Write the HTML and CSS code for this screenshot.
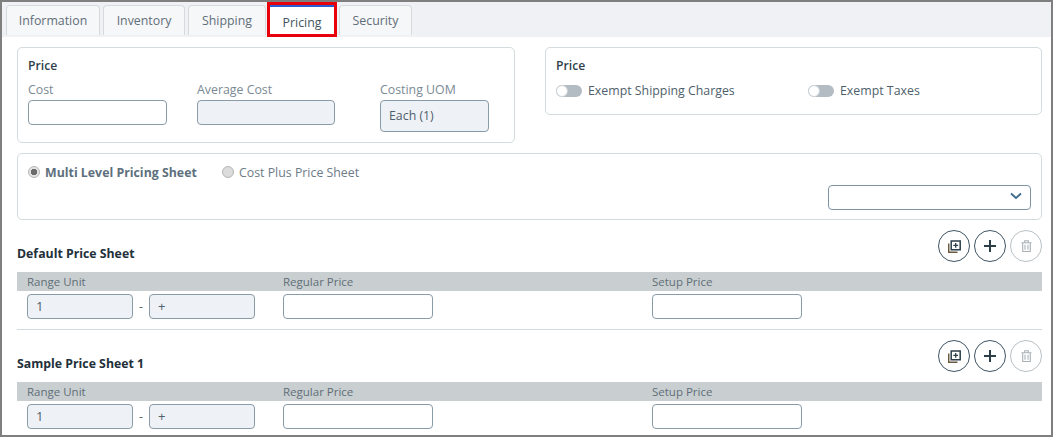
FILE: index.html
```html
<!DOCTYPE html>
<html lang="en">
<head>
<meta charset="utf-8">
<title>Pricing</title>
<link rel="stylesheet" href="styles.css">
</head>
<body>
<div class="frame">
  <nav class="tabs">
    <a class="tab tab-info">Information</a>
    <a class="tab tab-inv">Inventory</a>
    <a class="tab tab-ship">Shipping</a>
    <a class="tab-active"><span>Pricing</span></a>
    <a class="tab tab-sec">Security</a>
  </nav>
  <main class="content">
    <div class="top-row">
      <section class="panel panel-cost">
        <h3 class="panel-title">Price</h3>
        <div class="cost-fields">
          <div class="field field-cost"><label>Cost</label><div class="input"></div></div>
          <div class="field field-avg"><label>Average Cost</label><div class="input disabled"></div></div>
          <div class="field field-uom"><label>Costing UOM</label><div class="input disabled tall">Each (1)</div></div>
        </div>
      </section>
      <section class="panel panel-exempt">
        <h3 class="panel-title">Price</h3>
        <div class="toggles">
          <div class="toggle-item toggle-first"><span class="switch"><i></i></span>Exempt Shipping Charges</div>
          <div class="toggle-item"><span class="switch"><i></i></span>Exempt Taxes</div>
        </div>
      </section>
    </div>
    <section class="panel panel-sheet">
      <div class="radios">
        <div class="radio-item radio-first checked"><span class="radio"></span>Multi Level Pricing Sheet</div>
        <div class="radio-item"><span class="radio"></span>Cost Plus Price Sheet</div>
      </div>
      <div class="select-row">
        <div class="select">
          <svg width="12" height="8" viewBox="0 0 12 8"><path d="M1 1.5l5 4.500 5-4.500" fill="none" stroke="#3d6b8c" stroke-width="1.800"/></svg>
        </div>
      </div>
    </section>

    <section class="sheet">
      <div class="sheet-head">
        <h4>Default Price Sheet</h4>
        <div class="actions">
          <button class="circle"><svg width="13" height="13" viewBox="0 0 13 13"><path d="M.7 3.500v8.800h8.800" fill="none" stroke="#6b5a3e" stroke-width="1.500"/><path d="M3.200.9h9v8.800h-9z" fill="none" stroke="#2c3e4a" stroke-width="1.500"/><path d="M7.700 2.900v4.800M5.300 5.300h4.800" stroke="#2c3e4a" stroke-width="1.300"/></svg></button>
          <button class="circle"><svg width="12" height="12" viewBox="0 0 12 12"><path d="M6 0v12M0 6h12" stroke="#2c3e4a" stroke-width="2"/></svg></button>
          <button class="circle off"><svg width="11" height="12" viewBox="0 0 11 12"><path d="M.5 2.700h10M3.700 2.700V.8h3.600v1.900M1.700 2.700v8.800h7.600V2.700M4 4.700v5M7 4.700v5" fill="none" stroke="#a9b1b6" stroke-width="1.100"/></svg></button>
        </div>
      </div>
      <div class="grid-head"><span class="col-range">Range Unit</span><span class="col-reg">Regular Price</span><span>Setup Price</span></div>
      <div class="grid-row">
        <div class="input disabled range">1</div><span class="dash">-</span><div class="input disabled range">+</div>
        <div class="input price first-price"></div>
        <div class="input price"></div>
      </div>
    </section>
    <hr class="divider">
    <section class="sheet sheet-second">
      <div class="sheet-head">
        <h4>Sample Price Sheet 1</h4>
        <div class="actions">
          <button class="circle"><svg width="13" height="13" viewBox="0 0 13 13"><path d="M.7 3.500v8.800h8.800" fill="none" stroke="#6b5a3e" stroke-width="1.500"/><path d="M3.200.9h9v8.800h-9z" fill="none" stroke="#2c3e4a" stroke-width="1.500"/><path d="M7.700 2.900v4.800M5.300 5.300h4.800" stroke="#2c3e4a" stroke-width="1.300"/></svg></button>
          <button class="circle"><svg width="12" height="12" viewBox="0 0 12 12"><path d="M6 0v12M0 6h12" stroke="#2c3e4a" stroke-width="2"/></svg></button>
          <button class="circle off"><svg width="11" height="12" viewBox="0 0 11 12"><path d="M.5 2.700h10M3.700 2.700V.8h3.600v1.900M1.700 2.700v8.800h7.600V2.700M4 4.700v5M7 4.700v5" fill="none" stroke="#a9b1b6" stroke-width="1.100"/></svg></button>
        </div>
      </div>
      <div class="grid-head"><span class="col-range">Range Unit</span><span class="col-reg">Regular Price</span><span>Setup Price</span></div>
      <div class="grid-row">
        <div class="input disabled range">1</div><span class="dash">-</span><div class="input disabled range">+</div>
        <div class="input price first-price"></div>
        <div class="input price"></div>
      </div>
    </section>
  </main>
</div>
</body>
</html>
```
FILE: styles.css
```css
* { box-sizing: border-box; }
html, body { margin: 0; padding: 0; }
body { width: 1053px; height: 437px; overflow: hidden; background: #fff; font-family: "Open Sans", "Noto Sans", sans-serif; font-size: 12px; color: #5d6d78; }
.frame { width: 1053px; height: 437px; border: 2px solid #7f7f7f; overflow: hidden; background: #fff; }

.tabs { display: flex; height: 35px; background: #eff1f5; padding: 3px 0 0 4px; }
.tab { height: 30px; margin-right: 3px; border: 1px solid #d5dadd; border-bottom: 0; border-radius: 4px 4px 0 0; background: #f6f7f9; display: flex; align-items: center; justify-content: center; color: #5f6e78; font-size: 12.35px; }
.tab-info { width: 94px; }
.tab-inv { width: 82px; }
.tab-ship { width: 78px; margin-right: 1px; }
.tab-sec { width: 73px; }
.tab-active { width: 70px; height: 35px; margin-top: -3px; margin-right: 2px; border: 3px solid #e8000b; background: #fff; position: relative; display: flex; align-items: center; justify-content: center; padding-top: 6px; color: #41535f; font-size: 12.35px; }
.tab-active::before { content: ""; position: absolute; left: 0; right: 0; top: 0; height: 2px; background: #2a5bd0; }

.content { padding: 10px 9px 0 15px; }
.top-row { display: flex; justify-content: space-between; align-items: flex-start; }
.panel { border: 1px solid #d3dbde; border-radius: 5px; background: #fff; }
.panel-title { margin: 0; font-size: 12.2px; font-weight: 600; color: #2f3f4a; line-height: 17px; }
.panel-cost { width: 498px; height: 96px; padding: 9px 10px 0; }
.panel-exempt { width: 497px; height: 68px; padding: 9px 10px 0; }
.cost-fields { display: flex; margin-top: 8px; }
.field label { display: block; line-height: 16px; font-size: 12.35px; color: #7a8a95; margin-bottom: 2px; }
.field-cost { width: 169px; }
.field-cost .input { width: 139px; }
.field-avg { width: 183px; }
.field-avg .input { width: 138px; }
.field-uom .input { width: 109px; }
.input { height: 25px; border: 1px solid #8a9ba8; border-radius: 4px; background: #fff; color: #4f5f6b; font-size: 12.35px; padding: 0 0 2px 8px; display: flex; align-items: center; }
.input.disabled { background: #eef1f5; }
.input.tall { height: 32px; }
.range { font-size: 13px; }

.toggles { display: flex; margin-top: 9px; }
.toggle-item { display: flex; align-items: center; font-size: 12.35px; color: #4f5f6b; line-height: 16px; }
.toggle-first { width: 252px; }
.switch { width: 26px; height: 12px; border-radius: 6px; background: #b3bcc3; margin-right: 6px; position: relative; }
.switch i { position: absolute; left: 0; top: 0; width: 12px; height: 12px; border-radius: 50%; background: #fff; border: 1px solid #ccd3d8; }

.panel-sheet { margin-top: 10px; width: 1025px; height: 67px; padding: 11px 10px 0; }
.radios { display: flex; }
.radio-item { display: flex; align-items: center; line-height: 16px; font-size: 12.35px; color: #6c7b86; }
.radio-first { width: 194px; font-weight: 700; color: #5d6f7d; }
.radio { width: 12px; height: 12px; border-radius: 50%; border: 1px solid #b5b5b5; background: #dcdcdc; margin-right: 5px; margin-top: -2px; }
.checked .radio { background: radial-gradient(circle, #6b6b6b 0 3px, #e4e4e4 3.5px); }
.select-row { display: flex; justify-content: flex-end; margin-top: 4px; }
.select { width: 203px; height: 25px; border: 1px solid #7f94a3; border-radius: 4px; display: flex; align-items: center; justify-content: flex-end; padding: 0 8px 4px 0; }

.sheet { margin-top: 10px; width: 1025px; }
.sheet-second { margin-top: 10px; }
.sheet-head { display: flex; justify-content: space-between; align-items: flex-end; height: 32px; margin-bottom: 10px; }
.sheet-head h4 { margin: 0; font-size: 12.3px; font-weight: 700; color: #22303a; line-height: 17px; }
.actions { display: flex; gap: 4px; }
.circle { width: 32px; height: 32px; border-radius: 50%; border: 1px solid #3f5563; background: #fff; padding: 0; display: flex; align-items: center; justify-content: center; }
.circle.off { border-color: #b9c1c6; }
.grid-head { height: 19px; background: #c9ced0; display: flex; align-items: center; font-size: 11.5px; color: #5f6e78; padding-left: 10px; }
.col-range { width: 256px; }
.col-reg { width: 369px; }
.grid-row { display: flex; align-items: center; padding: 3px 0 0 10px; }
.range { width: 106px; }
.dash { width: 16px; text-align: center; color: #4f5f6b; }
.price { width: 150px; }
.first-price { margin-left: 28px; margin-right: 219px; }
.divider { border: 0; border-top: 1px solid #d3dbde; margin: 10px 0 0; width: 1025px; }
```
